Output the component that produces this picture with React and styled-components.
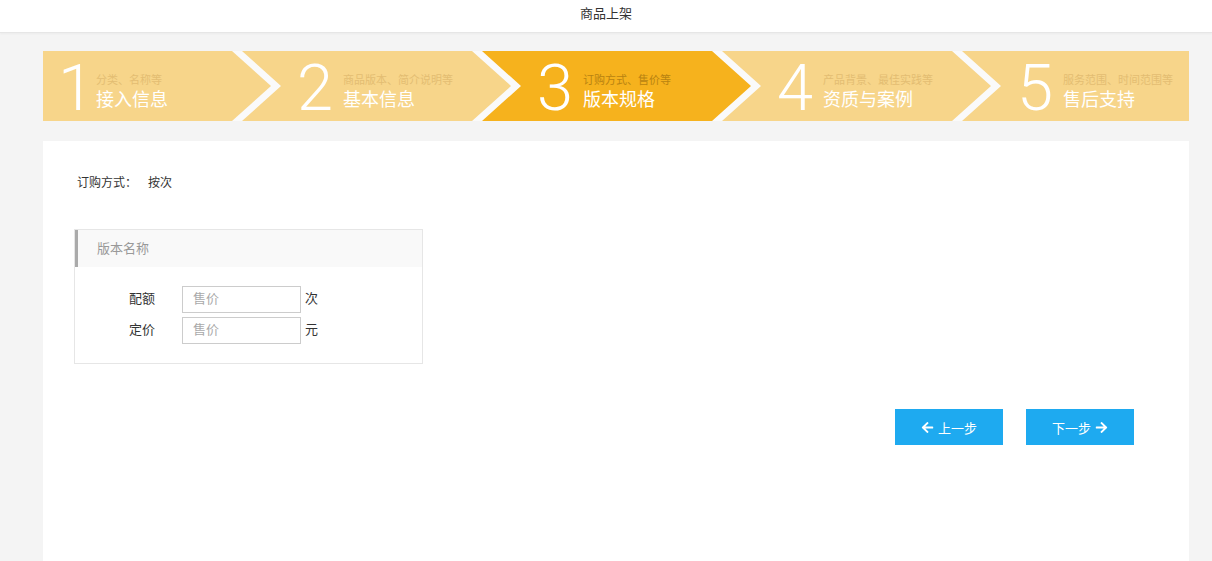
import styled, { createGlobalStyle } from "styled-components";
import { FaArrowLeft, FaArrowRight } from "react-icons/fa";

const GlobalStyle = createGlobalStyle`
  html, body {
    margin: 0;
    padding: 0;
    background: #f4f4f4;
    font-family: "Liberation Sans", "Noto Sans CJK SC", sans-serif;
    color: #333;
  }
`;

const TopBar = styled.header`
  height: 33px;
  box-sizing: border-box;
  padding-bottom: 7px;
  background: #fff;
  border-bottom: 1px solid #e6e6e6;
  box-shadow: 0 1px 2px rgba(0, 0, 0, 0.04);
  display: flex;
  align-items: center;
  justify-content: center;
  font-size: 13px;
  color: #333;
`;

const Main = styled.main`
  padding: 18px 23px 0 43px;
`;

const StepTrack = styled.ol`
  list-style: none;
  margin: 0;
  padding: 0;
  height: 70px;
  width: 1146px;
  display: flex;
  background: #fafafa;
  overflow: hidden;
`;

const DEPTH = 39;

const Step = styled.li`
  position: relative;
  flex: ${(p) => (p.$last ? "1 1 auto" : `0 0 ${p.$span + DEPTH - 10}px`)};
  margin-right: ${(p) => (p.$last ? 0 : `-${DEPTH - 10}px`)};
  height: 70px;
  background: ${(p) => (p.$active ? "#f6b21d" : "#f7d58a")};
  clip-path: ${(p) =>
    p.$last
      ? `polygon(0 0, 100% 0, 100% 100%, 0 100%, ${DEPTH}px 50%)`
      : p.$first
      ? `polygon(0 0, calc(100% - ${DEPTH}px) 0, 100% 50%, calc(100% - ${DEPTH}px) 100%, 0 100%)`
      : `polygon(0 0, calc(100% - ${DEPTH}px) 0, 100% 50%, calc(100% - ${DEPTH}px) 100%, 0 100%, ${DEPTH}px 50%)`};
  display: flex;
  align-items: center;
  padding-left: ${(p) => (p.$first ? 15 : DEPTH + 16)}px;
  box-sizing: border-box;
`;

const Digit = styled.span`
  font-family: Roboto, "Liberation Sans", sans-serif;
  font-weight: 300;
  font-size: 65px;
  line-height: 64px;
  color: #fff;
  margin-top: 3px;
  margin-right: ${(p) => (p.$narrow ? -8 : 0)}px;
`;

const StepText = styled.div`
  display: flex;
  flex-direction: column;
  margin-left: 10px;
  margin-top: 13px;
`;

const StepHint = styled.span`
  font-size: 11px;
  line-height: 14px;
  white-space: nowrap;
  color: ${(p) => (p.$active ? "#b98311" : "#e3bd72")};
`;

const StepTitle = styled.span`
  font-size: 18px;
  line-height: 26px;
  color: #fff;
  white-space: nowrap;
`;

const Panel = styled.section`
  margin-top: 20px;
  width: 1146px;
  height: 440px;
  background: #fff;
  box-sizing: border-box;
  padding: 32px 55px 0 31px;
`;

const OrderLine = styled.div`
  display: flex;
  align-items: center;
  gap: 11px;
  font-size: 12px;
  line-height: 20px;
  padding-left: 3px;
  color: #333;
`;

const Card = styled.div`
  margin-top: 36px;
  width: 349px;
  border: 1px solid #e6e6e6;
  box-sizing: border-box;
`;

const CardHead = styled.div`
  height: 37px;
  box-sizing: border-box;
  padding-bottom: 3px;
  background: #f9f9f9;
  border-left: 3px solid #aaa;
  display: flex;
  align-items: center;
  padding-left: 19px;
  font-size: 13px;
  color: #999;
`;

const CardBody = styled.div`
  padding: 19px 0 19px 54px;
  display: flex;
  flex-direction: column;
  gap: 4px;
`;

const FieldRow = styled.div`
  display: flex;
  align-items: center;
  font-size: 13px;
  line-height: 17px;
  color: #333;
`;

const FieldLabel = styled.span`
  width: 53px;
  margin-top: -3px;
`;

const Unit = styled.span`
  margin-top: -3px;
`;

const PriceInput = styled.input`
  width: 119px;
  height: 27px;
  box-sizing: border-box;
  border: 1px solid #ccc;
  padding: 0 10px 2px;
  font-size: 13px;
  font-family: inherit;
  color: #333;
  outline: none;
  margin-right: 4px;

  &::placeholder {
    color: #aaa;
  }
`;

const Actions = styled.div`
  margin-top: 45px;
  display: flex;
  justify-content: flex-end;
  gap: 23px;
`;

const NavButton = styled.button`
  width: 108px;
  height: 36px;
  border: 0;
  background: #1eaaf0;
  color: #fff;
  font-size: 13px;
  font-family: inherit;
  display: flex;
  align-items: center;
  justify-content: center;
  gap: 4px;
  cursor: pointer;

  svg {
    font-size: 13px;
  }
`;

const steps = [
  { n: 1, hint: "分类、名称等", title: "接入信息", span: 199 },
  { n: 2, hint: "商品版本、简介说明等", title: "基本信息", span: 240 },
  { n: 3, hint: "订购方式、售价等", title: "版本规格", span: 240, active: true },
  { n: 4, hint: "产品背景、最佳实践等", title: "资质与案例", span: 240 },
  { n: 5, hint: "服务范围、时间范围等", title: "售后支持", span: 0 },
];

export default function App() {
  return (
    <>
      <GlobalStyle />
      <TopBar>商品上架</TopBar>
      <Main>
        <StepTrack>
          {steps.map((s, i) => (
            <Step
              key={s.n}
              $span={s.span}
              $first={i === 0}
              $last={i === steps.length - 1}
              $active={s.active}
            >
              <Digit $narrow={s.n === 1}>{s.n}</Digit>
              <StepText>
                <StepHint $active={s.active}>{s.hint}</StepHint>
                <StepTitle>{s.title}</StepTitle>
              </StepText>
            </Step>
          ))}
        </StepTrack>

        <Panel>
          <OrderLine>
            <span>订购方式：</span>
            <span>按次</span>
          </OrderLine>

          <Card>
            <CardHead>版本名称</CardHead>
            <CardBody>
              <FieldRow>
                <FieldLabel>配额</FieldLabel>
                <PriceInput placeholder="售价" />
                <Unit>次</Unit>
              </FieldRow>
              <FieldRow>
                <FieldLabel>定价</FieldLabel>
                <PriceInput placeholder="售价" />
                <Unit>元</Unit>
              </FieldRow>
            </CardBody>
          </Card>

          <Actions>
            <NavButton>
              <FaArrowLeft /> 上一步
            </NavButton>
            <NavButton>
              下一步 <FaArrowRight />
            </NavButton>
          </Actions>
        </Panel>
      </Main>
    </>
  );
}
